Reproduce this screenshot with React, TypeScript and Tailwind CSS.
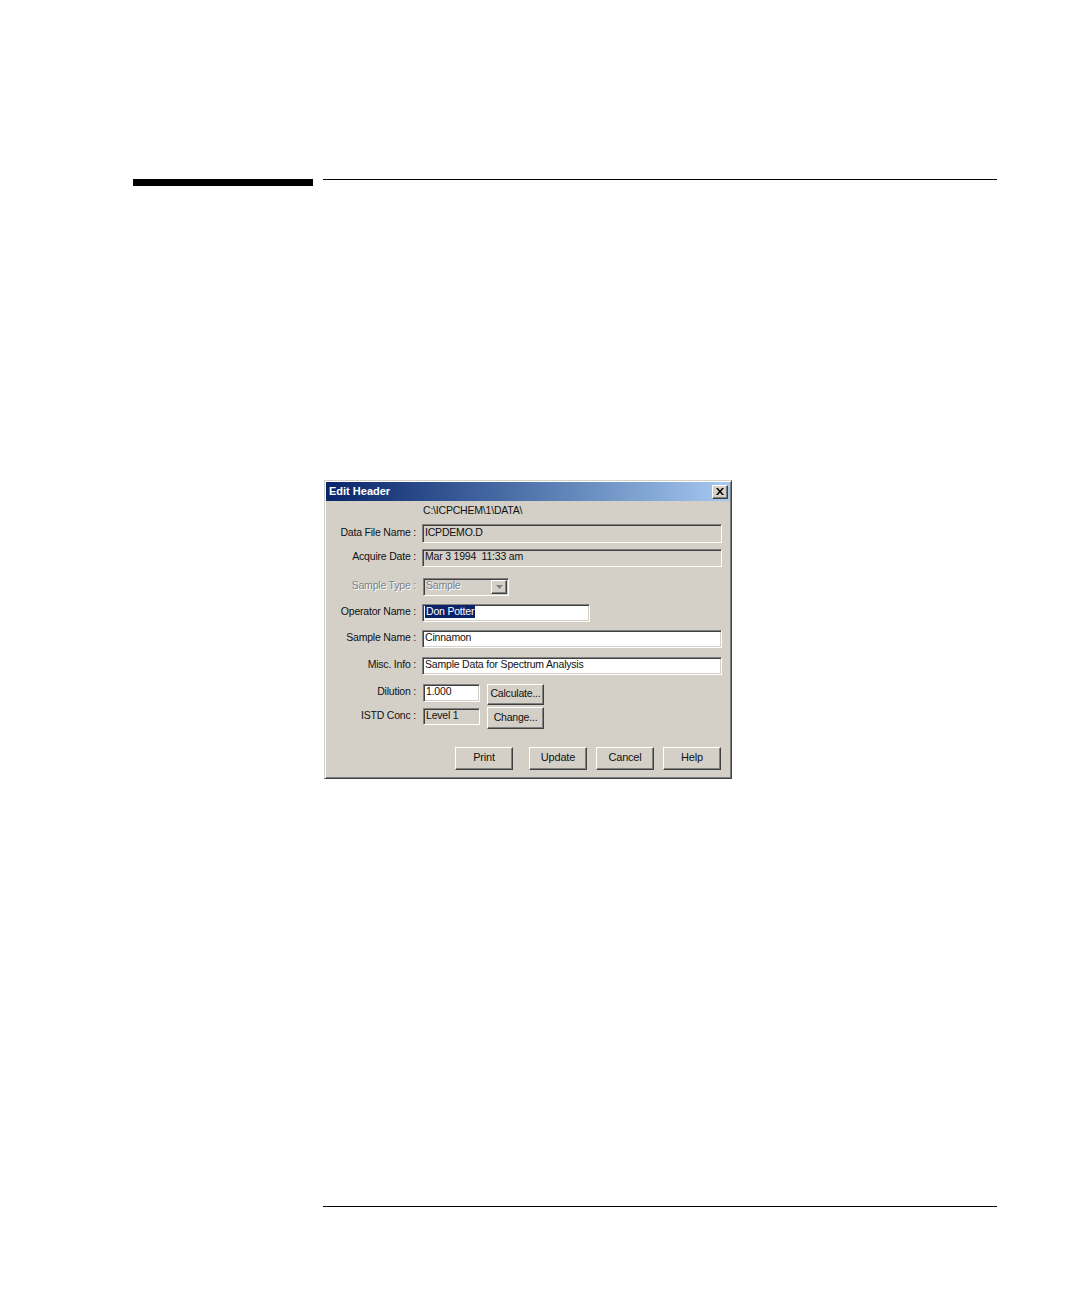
import React from "react";

const sunken =
  "border border-t-[#808080] border-l-[#808080] border-b-white border-r-white shadow-[inset_1px_1px_0_#404040,inset_-1px_-1px_0_#d4d0c8]";
const raised =
  "border border-t-white border-l-white border-b-[#404040] border-r-[#404040] shadow-[inset_-1px_-1px_0_#808080]";

function Label({ children, disabled }: { children: React.ReactNode; disabled?: boolean }) {
  return (
    <div
      className={
        disabled
          ? "w-[93px] shrink-0 text-right pr-[2px] pb-[3px] text-[#808080] [text-shadow:1px_1px_0_#ffffff]"
          : "w-[93px] shrink-0 text-right pr-[2px] pb-[3px] text-[#111]"
      }
    >
      {children}
    </div>
  );
}

function Field({
  value,
  width,
  white,
  height = "h-[18px]",
}: {
  value: React.ReactNode;
  width: string;
  white?: boolean;
  height?: string;
}) {
  return (
    <div
      className={`${sunken} ${width} ${height} ${white ? "bg-white" : "bg-[#d4d0c8]"} flex items-center pl-[2px] pb-[3px] overflow-hidden whitespace-pre text-[#111]`}
    >
      {value}
    </div>
  );
}

function Button({ children, width = "w-[58px]" }: { children: React.ReactNode; width?: string }) {
  return (
    <div className={`${raised} ${width} h-full bg-[#d4d0c8] flex items-center justify-center pb-[2px] text-[#111]`}>
      {children}
    </div>
  );
}

export default function App() {
  return (
    <div className="min-h-[1298px] w-[1080px] bg-white font-['Liberation_Sans',Arial,sans-serif]">
      {/* header rule */}
      <div className="pt-[179px] flex items-start">
        <div className="ml-[133px] w-[180px] h-[7px] bg-black" />
        <div className="ml-[10px] w-[674px] h-px bg-black" />
      </div>

      {/* dialog */}
      <div
        className="mt-[294px] ml-[324px] w-[408px] h-[299px] bg-[#d4d0c8] border border-t-[#d4d0c8] border-l-[#d4d0c8] border-b-[#404040] border-r-[#404040] shadow-[inset_1px_1px_0_#ffffff,inset_-1px_-1px_0_#808080] text-[10.5px] leading-none tracking-[-0.2px]"
      >
        <div className="mx-px mt-px h-[19px] bg-gradient-to-r from-[#0a246a] to-[#a6caf0] flex items-center justify-between pl-[3px] pr-[2px]">
          <span className="text-white font-bold text-[11px] tracking-normal">Edit Header</span>
          <div className={`${raised} w-[16px] h-[14px] bg-[#d4d0c8] flex items-center justify-center`}>
            <svg width="8" height="7" viewBox="0 0 8 7">
              <path d="M0 0h2l2 2.5L6 0h2L5 3.5 8 7H6L4 4.5 2 7H0l3-3.5z" fill="#000" />
            </svg>
          </div>
        </div>

        <div className="flex flex-col">
          <div className="mt-[2px] h-[14px] pl-[98px] flex items-center text-[#111]">C:\ICPCHEM\1\DATA\</div>

          <div className="mt-[7px] h-[19px] flex items-center gap-[4px]">
            <Label>Data File Name :</Label>
            <Field value="ICPDEMO.D" width="w-[300px]" height="h-[19px]" />
          </div>

          <div className="mt-[6px] h-[18px] flex items-center gap-[4px]">
            <Label>Acquire Date :</Label>
            <Field value="Mar 3 1994  11:33 am" width="w-[300px]" />
          </div>

          <div className="mt-[11px] h-[18px] flex items-center gap-[5px]">
            <Label disabled>Sample Type :</Label>
            <div className={`${sunken} w-[86px] h-[18px] bg-[#d4d0c8] flex items-center justify-between pl-[2px] pr-px`}>
              <span className="pb-[3px] text-[#808080] [text-shadow:1px_1px_0_#ffffff]">Sample</span>
              <div className={`${raised} w-[16px] h-[14px] bg-[#d4d0c8] flex items-center justify-center`}>
                <svg width="7" height="4" viewBox="0 0 7 4">
                  <path d="M0 0h7L3.5 4z" fill="#808080" />
                </svg>
              </div>
            </div>
          </div>

          <div className="mt-[8px] h-[18px] flex items-center gap-[4px]">
            <Label>Operator Name :</Label>
            <Field
              value={<span className="bg-[#0a246a] text-white px-px py-px">Don Potter</span>}
              width="w-[168px]"
              white
            />
          </div>

          <div className="mt-[8px] h-[18px] flex items-center gap-[4px]">
            <Label>Sample Name :</Label>
            <Field value="Cinnamon" width="w-[300px]" white />
          </div>

          <div className="mt-[9px] h-[18px] flex items-center gap-[4px]">
            <Label>Misc. Info :</Label>
            <Field value="Sample Data for Spectrum Analysis" width="w-[300px]" white />
          </div>

          <div className="mt-[9px] h-[21px] flex items-start gap-[5px]">
            <div className="h-[18px] flex items-center">
              <Label>Dilution :</Label>
            </div>
            <Field value="1.000" width="w-[57px]" white />
            <div className="ml-[2px] h-[21px]">
              <Button width="w-[57px]">Calculate...</Button>
            </div>
          </div>

          <div className="mt-[2px] h-[22px] flex items-start gap-[5px]">
            <div className="mt-[1px] h-[17px] flex items-center">
              <Label>ISTD Conc :</Label>
            </div>
            <div className="mt-[1px]">
              <Field value="Level 1" width="w-[57px]" height="h-[17px]" />
            </div>
            <div className="ml-[2px] h-[22px]">
              <Button width="w-[57px]">Change...</Button>
            </div>
          </div>

          <div className="mt-[18px] h-[23px] flex pl-[130px] text-[11px]">
            <Button>Print</Button>
            <div className="ml-[16px] h-full">
              <Button>Update</Button>
            </div>
            <div className="ml-[9px] h-full">
              <Button>Cancel</Button>
            </div>
            <div className="ml-[9px] h-full">
              <Button>Help</Button>
            </div>
          </div>
        </div>
      </div>

      {/* footer rule */}
      <div className="mt-[427px] ml-[323px] w-[674px] h-px bg-black" />
    </div>
  );
}
